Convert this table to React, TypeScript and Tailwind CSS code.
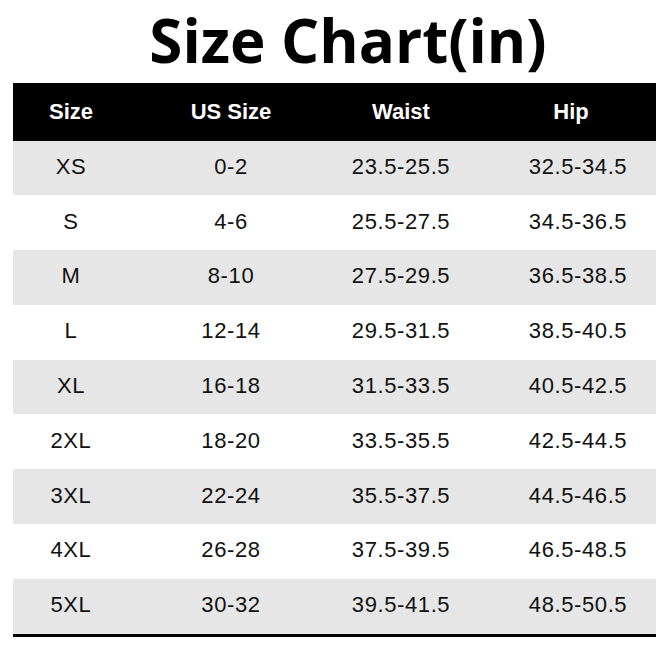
const rows = [
    ["XS", "0-2", "23.5-25.5", "32.5-34.5"],
    ["S", "4-6", "25.5-27.5", "34.5-36.5"],
    ["M", "8-10", "27.5-29.5", "36.5-38.5"],
    ["L", "12-14", "29.5-31.5", "38.5-40.5"],
    ["XL", "16-18", "31.5-33.5", "40.5-42.5"],
    ["2XL", "18-20", "33.5-35.5", "42.5-44.5"],
    ["3XL", "22-24", "35.5-37.5", "44.5-46.5"],
    ["4XL", "26-28", "37.5-39.5", "46.5-48.5"],
    ["5XL", "30-32", "39.5-41.5", "48.5-50.5"],
];

const cols = "grid grid-cols-[116px_204px_136px_187px]";

export default function App() {
    return (
        <div className="w-[670px] h-[645px] bg-white" style={{ fontFamily: '"Liberation Sans", Arial, sans-serif' }}>
            <h1
                className="pl-[26px] text-center text-[60px] leading-[80px] font-bold text-black"
                style={{ fontFamily: '"Open Sans", "Noto Sans", sans-serif' }}
            >
                Size Chart(in)
            </h1>
            <div className="mx-[13px] mt-[3px] w-[643px] border-b-[3px] border-black">
                <div className={`${cols} h-[57.5px] items-center bg-black text-[22px] font-bold text-white`}>
                    <div className="text-center">Size</div>
                    <div className="text-center">US Size</div>
                    <div className="text-center">Waist</div>
                    <div className="text-center pl-[17px]">Hip</div>
                </div>
                {rows.map((row, idx) => (
                    <div
                        key={row[0]}
                        className={`${cols} h-[54.8px] items-center pb-[3px] text-[22px] tracking-[0.6px] text-[#111] ${
                            idx % 2 === 0 ? "bg-[#e6e6e6]" : "bg-white"
                        }`}
                    >
                        <div className="text-center">{row[0]}</div>
                        <div className="text-center">{row[1]}</div>
                        <div className="text-center">{row[2]}</div>
                        <div className="text-center pl-[31px]">{row[3]}</div>
                    </div>
                ))}
            </div>
        </div>
    );
}
